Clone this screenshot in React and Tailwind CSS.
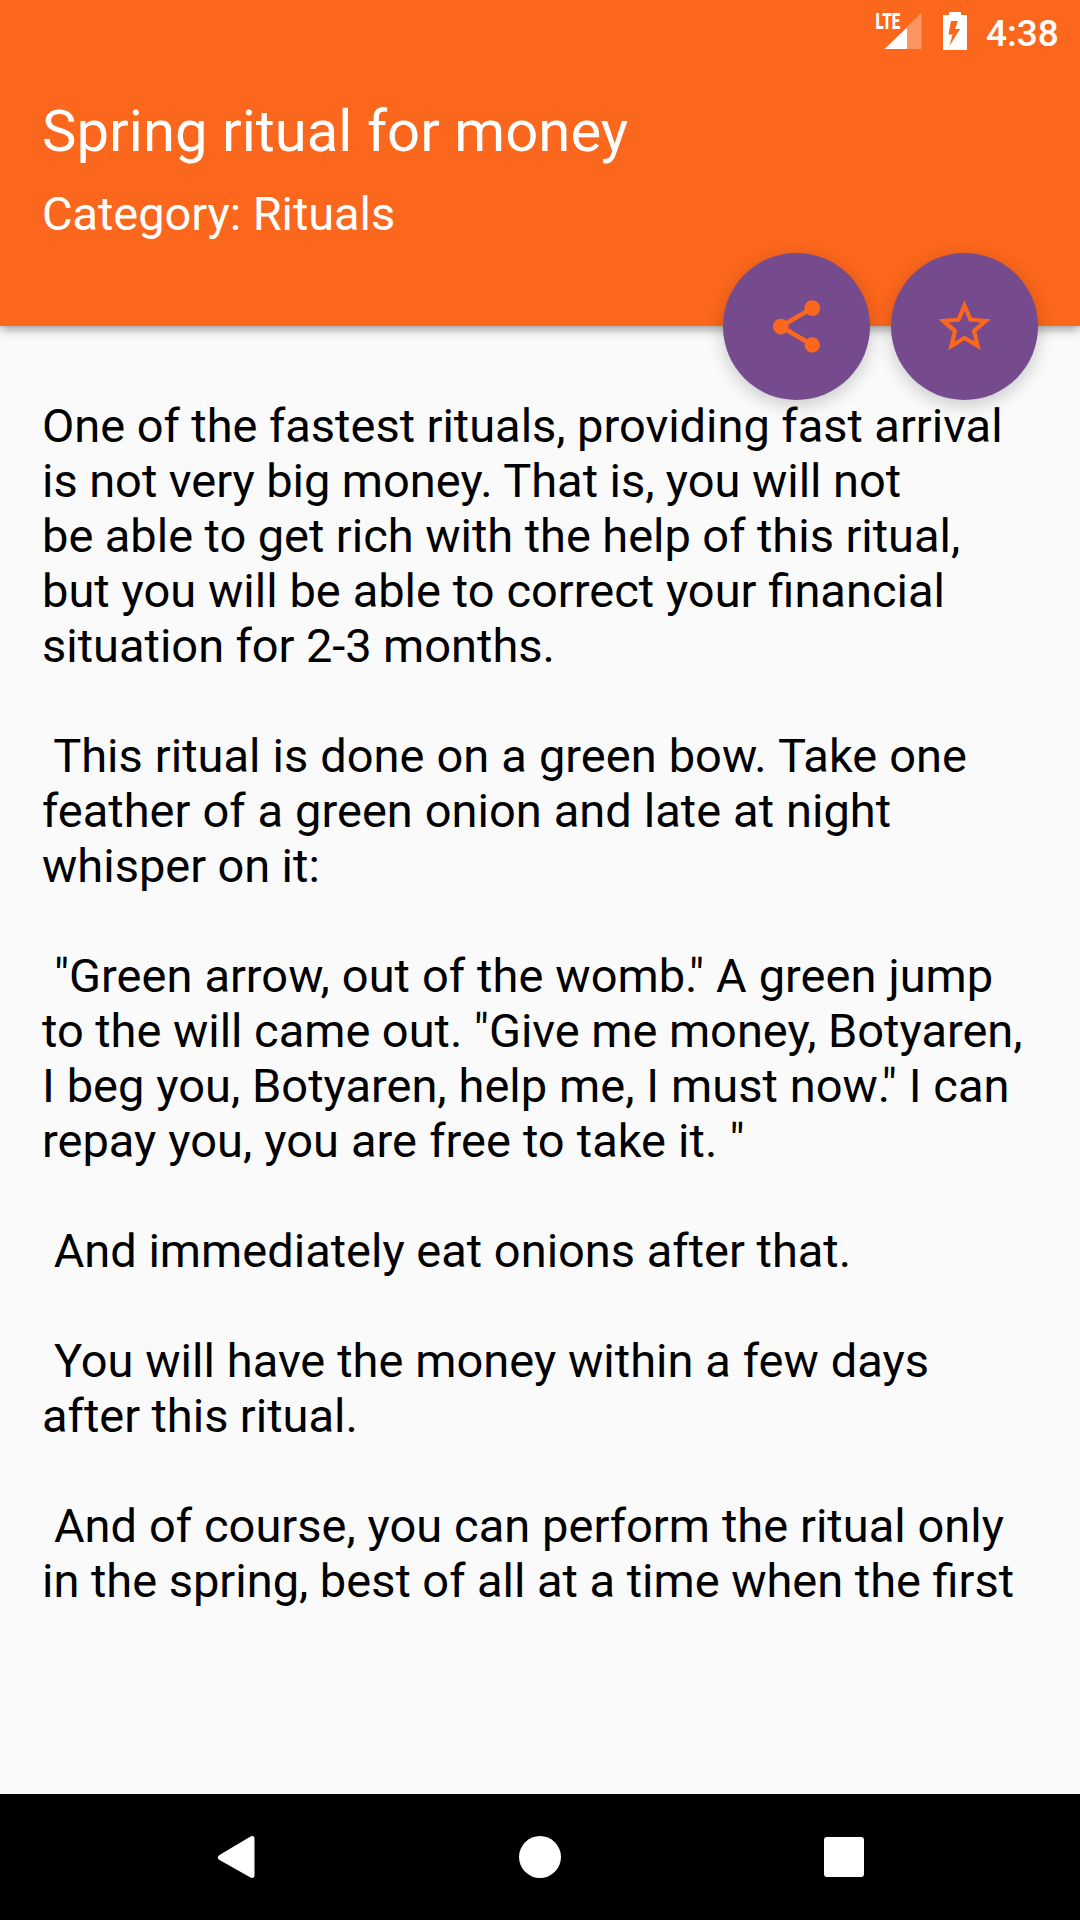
// Each entry is a line of text and its word spacing in pixels.
const lines = [
  ['One of the fastest rituals, providing fast arrival', -0.2],
  ['is not very big money. That is, you will not', -0.2],
  ['be able to get rich with the help of this ritual,', -0.2],
  ['but you will be able to correct your financial', 0.2],
  ['situation for 2-3 months.', -0.3],
  ['', 0],
  [' This ritual is done on a green bow. Take one', 0.4],
  ['feather of a green onion and late at night', 0.35],
  ['whisper on it:', -0.3],
  ['', 0],
  [' "Green arrow, out of the womb." A green jump', 0.35],
  ['to the will came out. "Give me money, Botyaren,', -0.15],
  ['I beg you, Botyaren, help me, I must now." I can', 0.25],
  ['repay you, you are free to take it. "', 0.45],
  ['', 0],
  [' And immediately eat onions after that.', 0],
  ['', 0],
  [' You will have the money within a few days', 0.25],
  ['after this ritual.', -0.3],
  ['', 0],
  [' And of course, you can perform the ritual only', 0.25],
  ['in the spring, best of all at a time when the first', -0.1],
];

// Moves a quote mark up against the full stop before it.
function Line({ text }) {
  const at = text.indexOf('."');
  if (at < 0) return text;
  return (
    <>
      {text.slice(0, at)}
      <span className="tracking-[-8.5px]">.</span>
      {text.slice(at + 1)}
    </>
  );
}

function StatusBar() {
  return (
    <div className="flex h-[63px] justify-end text-white">
      <svg className="h-[63px] w-[220px]" viewBox="860 0 220 63">
        <path d="M921.500 12.500v36.500h-14.500V27z" fill="#fff" fillOpacity=".3" />
        <path d="M907 27.500v21.500h-22.500z" fill="#fff" />
        <text transform="translate(875.5 29) scale(0.67 1)" fontFamily="Roboto" fontSize="22.5" fontWeight="900" fill="#fff">LTE</text>
        <path fillRule="evenodd" d="M949 12h12v3h6v35h-24v-35h6zM951 21l-2.500 13.500h4l-3 11.500 10.500-17h-5l3-8z" fill="#fff" />
        <text x="986" y="46" fontFamily="Roboto" fontSize="37" fontWeight="500" fill="#fff">4:38</text>
      </svg>
    </div>
  );
}

function RoundButton({ label, children }) {
  return (
    <button aria-label={label} className="flex size-[147px] items-center justify-center rounded-full bg-[#764b8e] text-[#fb671c] shadow-[0_5px_18px_rgba(0,0,0,0.2)]">
      <svg className="size-[63px]" viewBox="0 0 24 24" fill="currentColor">{children}</svg>
    </button>
  );
}

export default function App() {
  return (
    <div className="flex h-[1920px] w-[1080px] flex-col overflow-hidden bg-[#fafafa] font-[Roboto,sans-serif]">
      <header className="relative h-[326px] shrink-0 bg-[#fb671c] text-white shadow-[0_3px_10px_rgba(0,0,0,0.4)]">
        <StatusBar />
        <h1 className="ml-[42px] mt-[34px] text-[58px] leading-[68px] tracking-[0.03px]">Spring ritual for money</h1>
        <h2 className="ml-[42px] mt-[21px] text-[47px] leading-[55px] tracking-[-0.06px]">Category: Rituals</h2>
        <div className="absolute right-[42px] top-[253px] flex gap-[21px]">
          <RoundButton label="Share">
            <path d="M18 16.08c-.76 0-1.44.3-1.96.77L8.91 12.7c.05-.23.09-.46.09-.7s-.04-.47-.09-.7l7.05-4.11c.54.5 1.25.81 2.04.81 1.66 0 3-1.34 3-3s-1.34-3-3-3-3 1.34-3 3c0 .24.04.47.09.7L8.04 9.81C7.5 9.31 6.79 9 6 9c-1.66 0-3 1.34-3 3s1.34 3 3 3c.79 0 1.5-.31 2.04-.81l7.12 4.16c-.05.21-.08.43-.08.65 0 1.61 1.31 2.92 2.92 2.92s2.92-1.31 2.92-2.92-1.31-2.92-2.92-2.92z" />
          </RoundButton>
          <RoundButton label="Favorite">
            <path d="M22 9.24l-7.19-.62L12 2 9.19 8.63 2 9.24l5.46 4.73L5.82 21 12 17.27 18.18 21l-1.63-7.03L22 9.24zM12 15.4l-3.76 2.27 1-4.28-3.32-2.88 4.38-.38L12 6.1l1.71 4.04 4.38.38-3.32 2.88 1 4.28L12 15.4z" />
          </RoundButton>
        </div>
      </header>
      <main className="flex-1 whitespace-pre pl-[42px] pt-[72px] text-[47px] leading-[55px] text-black">
        {lines.map(([text, spacing], i) => (
          <p key={i} className="h-[55px]" style={{ wordSpacing: `${spacing}px` }}>
            <Line text={text} />
          </p>
        ))}
      </main>
      <nav className="h-[126px] shrink-0 bg-black">
        <svg className="h-[126px] w-[1080px]" viewBox="0 1794 1080 126" fill="#fff">
          <path d="M254.500 1839v36q0 4-4 2.500l-31-17.500q-3.500-2.500 0-5l31-18.500q4-1.500 4 2.500z" />
          <circle cx="540" cy="1857" r="21" />
          <rect x="824" y="1837" width="40" height="40" rx="3" />
        </svg>
      </nav>
    </div>
  );
}
